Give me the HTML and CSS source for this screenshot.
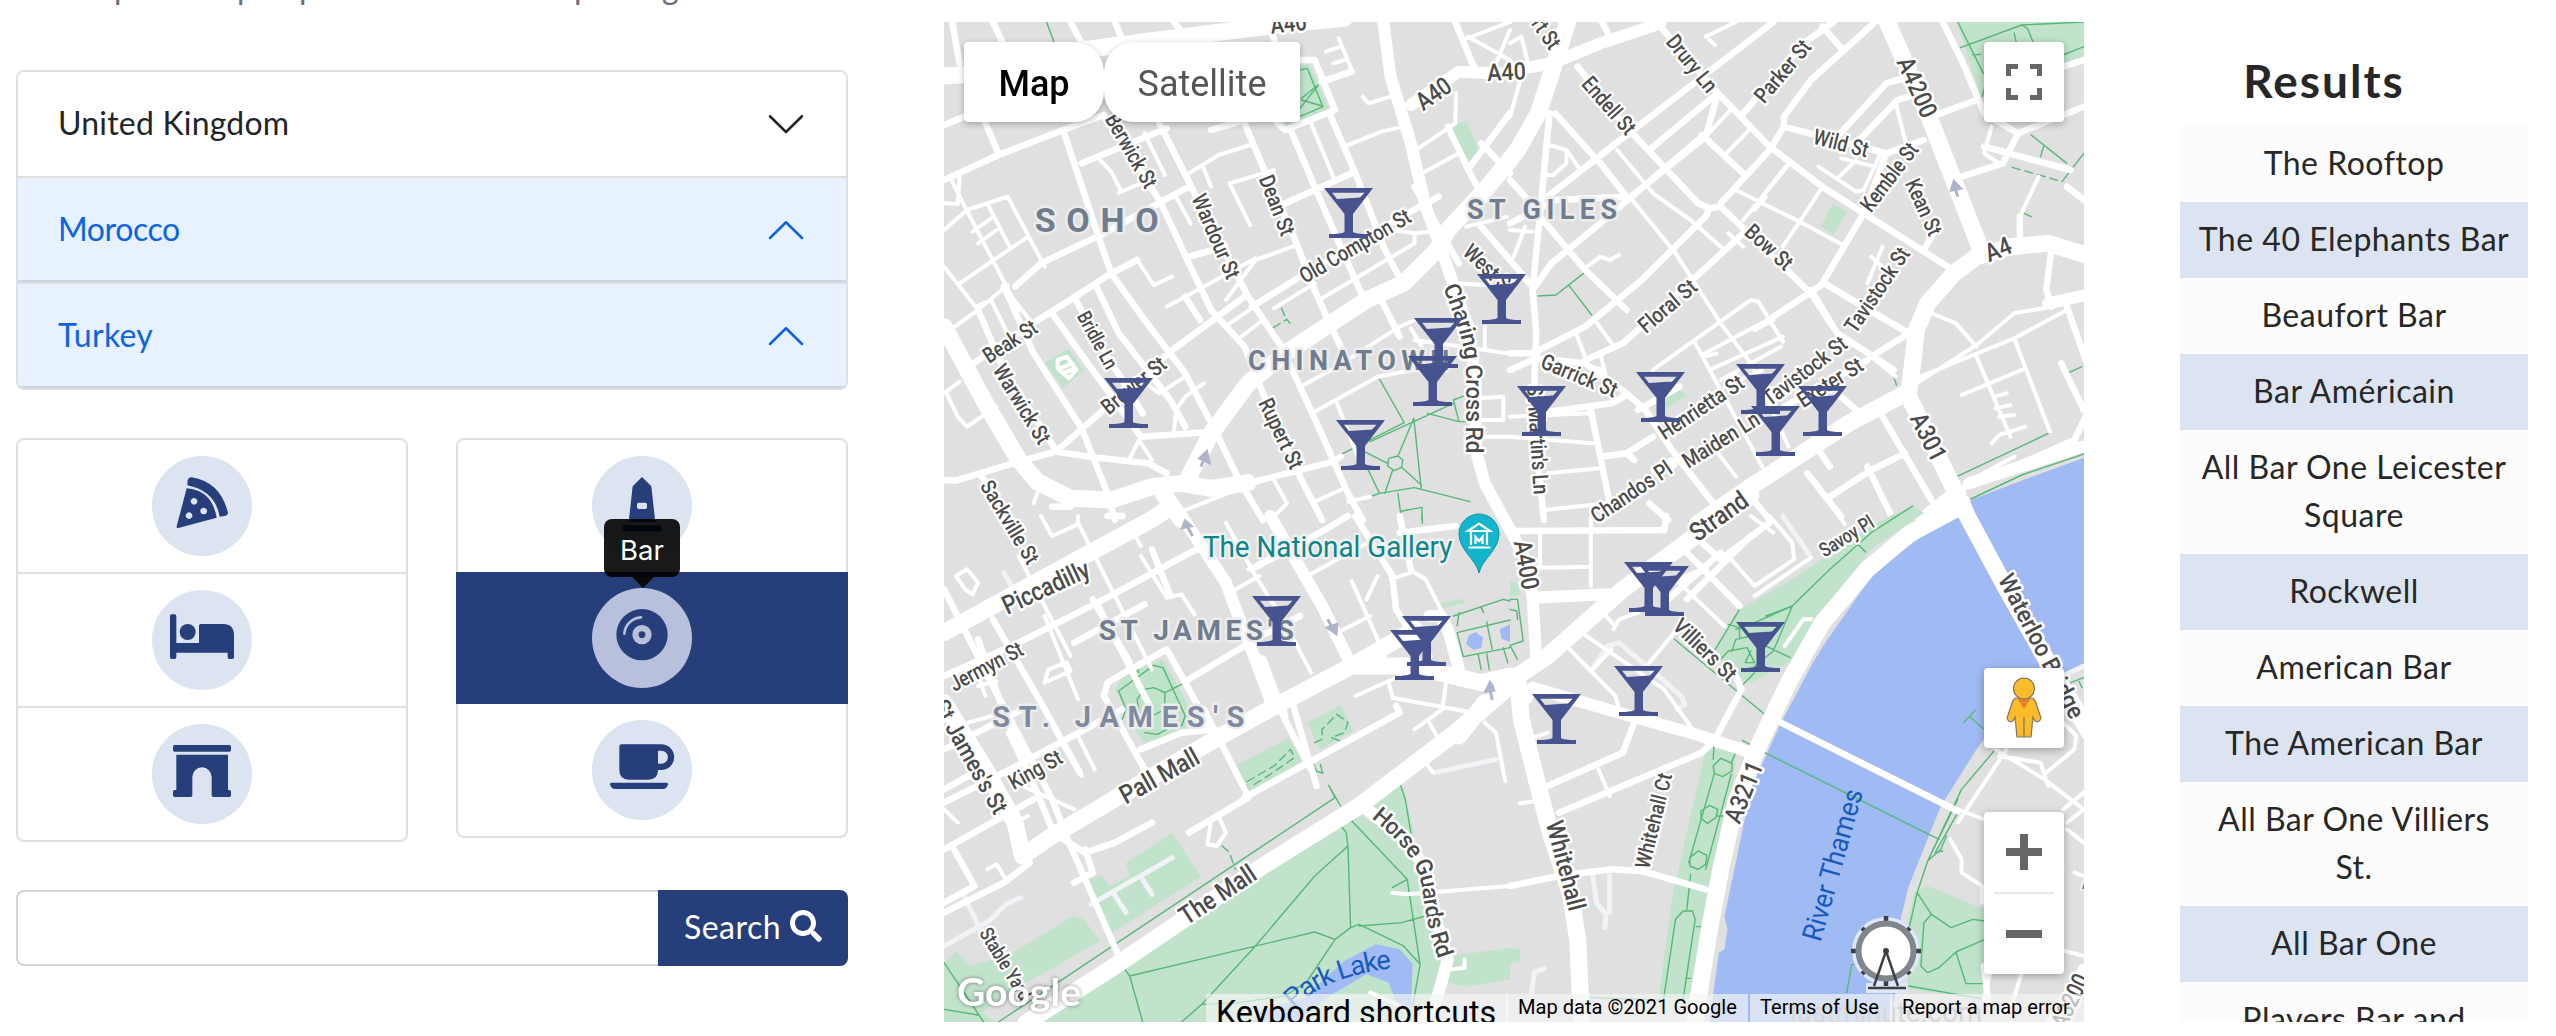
FILE: index.html
```html
<!DOCTYPE html>
<html lang="en">
<head>
<meta charset="utf-8">
<title>Places</title>
<link rel="stylesheet" href="styles.css">
</head>
<body>
<main class="page">
  <section class="filters">
    <p class="intro"><span>p</span><span>p</span><span>p</span><span>p</span><span>g</span></p>
    <div class="accordion">
      <div class="country"><span class="w-uk">United Kingdom</span><svg viewBox="0 0 16 16"><path d="M1.6 4.9 8 11.2l6.4-6.3"/></svg></div>
      <div class="country open"><span class="w-mo">Morocco</span><svg viewBox="0 0 16 16"><path d="M1.6 11.2 8 4.9l6.4 6.3"/></svg></div>
      <div class="country open"><span class="w-tu">Turkey</span><svg viewBox="0 0 16 16"><path d="M1.6 11.2 8 4.9l6.4 6.3"/></svg></div>
    </div>
    <div class="categories">
      <div class="list">
        <div class="item"><svg class="badge" viewBox="0 0 300 300"><path d="M107 72q3-9 12-8Q205 78 228 170q0 7-7 9l-18 3Q190 105 106 88z"/><path fill-rule="evenodd" d="M104 97Q180 103 194 185L79 216q-6 1-5-5zM126 126a10 10 0 1 0 .1 0zM155 155a10 10 0 1 0 .1 0zM111 169a10 10 0 1 0 .1 0z"/></svg></div>
        <div class="item"><svg class="badge" viewBox="0 0 300 300"><path d="M59 73h9q5 0 5 5v81h68v-52q0-5 5-5h67q33 0 33 34v66q0 5-5 5h-9q-5 0-5-5v-14H73v14q0 5-5 5h-9q-5 0-5-5V78q0-5 5-5z"/><circle cx="107" cy="126" r="24"/></svg></div>
        <div class="item"><svg class="badge" viewBox="0 0 300 300"><rect x="63" y="63" width="174" height="20" rx="5"/><path d="M73 92h155v106h4q5 0 5 5v11q0 5-5 5h-48q-5 0-5-5v-55a29 29 0 0 0-58 0v55q0 5-5 5H68q-5 0-5-5v-11q0-5 5-5h5z"/></svg></div>
      </div>
      <div class="list">
        <div class="item"><svg class="badge" viewBox="0 0 300 300"><path fill-rule="evenodd" d="M150 63 178 91 190 198H110L122 91zM140 140q-5 0-5 5v9q0 5 5 5h20q5 0 5-5v-9q0-5-5-5zM92 208h116v18H92z"/></svg></div>
        <div class="item active"><svg class="badge" viewBox="0 0 300 300"><circle cx="150" cy="140" r="77"/><circle class="gap" cx="150" cy="140" r="29"/><circle cx="150" cy="140" r="10"/><path class="shine" d="M97 137A53 53 0 0 1 147 88"/></svg><span class="tooltip">Bar</span></div>
        <div class="item"><svg class="badge" viewBox="0 0 300 300"><path fill-rule="evenodd" d="M88 73h120a38 38 0 0 1 0 77h-10q0 29-29 29h-58q-29 0-29-29V79q0-6 6-6zM198 92v39h10a19 19 0 0 0 0-39z"/><path d="M58 188h166q4 0 4 5-3 14-16 14H70q-13 0-16-14 0-5 4-5z"/></svg></div>
      </div>
    </div>
    <div class="search"><div class="field"></div><div class="button"><span class="w-se">Search</span><svg viewBox="0 0 512 512"><path d="M505 442.700 405.300 343c-4.500-4.500-10.600-7-17-7H372c27.600-35.300 44-79.700 44-128C416 93.100 322.900 0 208 0S0 93.100 0 208s93.100 208 208 208c48.300 0 92.700-16.400 128-44v16.300c0 6.400 2.500 12.500 7 17l99.700 99.700c9.400 9.400 24.600 9.400 33.900 0l28.300-28.300c9.400-9.400 9.400-24.600.1-34zM208 336c-70.700 0-128-57.200-128-128 0-70.700 57.200-128 128-128 70.700 0 128 57.200 128 128 0 70.700-57.200 128-128 128z"/></svg></div></div>
  </section>

  <section class="map">
    <svg class="tiles" viewBox="944 22 1140 1000">
      <rect class="land" x="944" y="22" width="1140" height="1000"/>
      <g class="sheet nw" transform="translate(930 0) scale(.3699 .33333)">
        <path class="park" d="M990 200 1025 190 1080 330 960 375zM1405 380 1450 362 1485 455 1460 490zM310 1090 375 1045 415 1110 360 1165z"/>
        <path class="path" d="M1000 210 1020 205 1062 320 1000 350M1000 325 1050 255M1005 295 1045 258M1005 300 1060 318M315 66 335 125M1215 1137 1282 1268 1090 1375M1190 1325 1415 1210M1308 1255 1328 1465M1308 1255 1265 1368 1240 1375 1237 1398 1255 1412 1275 1402 1278 1380 1265 1368M1237 1390 1165 1350M1278 1405 1328 1455M1250 1412 1230 1480M1185 1410 1215 1480 1195 1488M1215 1480 1310 1463 1460 1505M1345 1240 1430 1265 1415 1200 1445 1187M1430 1265 1450 1265M1265 1480 1275 1560M1275 1533 1330 1522V1560"/>
        <path class="path dash" d="M950 925 960 950M928 983 965 958 980 980"/>
        <path class="r4" d="M345 1080 370 1070 395 1110 375 1135 345 1105zM352 1105 385 1090M360 1120 390 1105M38 690 100 630 210 590 310 800M38 610 75 612 80 530M60 545 80 590 240 930M80 850 265 710M60 985 130 930 210 855M115 695 165 655M130 730 180 690M155 610 215 740M38 800 130 930M125 920 165 900 205 990M460 480 490 515 515 570M510 578 570 550M580 400 635 525M665 590 705 672M560 780 605 855 655 830M810 550 865 675M810 550 930 510M740 505 760 560M700 520 780 465 865 435M1030 370 1090 530M1120 440 1220 395 1280 380M1070 155 1110 140M1105 115 1140 210 1065 245M1090 190 1120 180M1170 290 1185 310 1245 290M1320 445 1420 370 1422 280M1330 520 1430 460M1250 690 1310 700V730L1060 895M1310 700 1400 690M715 770 800 735M810 970 870 925M830 1020 900 960M1010 1155 1100 1100 1270 980 1310 960M1040 1235 1210 1130 1400 1090M45 1180 75 1250 100 1280 180 1220M660 1290 665 1230 690 1190 740 1150M38 1180 80 1145M800 900 880 780 980 740M640 920 740 860 880 775M540 1375 565 1320 600 1380M280 1510 290 1480M690 1530 850 1460M930 1440 965 1510 920 1560M1100 1210 1160 1380M1040 1505 1110 1470M1130 1505 1190 1490M1440 120 1568 66M1455 110 1568 180M1530 190 1568 90M1310 1020 1560 1060M1480 1195 1550 1190V1260H1480M1490 1310H1568M1500 980V1050M1430 850 1560 860M930 925 1040 850M1450 680 1560 650M1300 985 1330 1040M620 1180 690 1130M270 960 200 860M560 1130 620 1180"/>
        <path class="r7" d="M60 66 80 190M170 66 195 125M380 66 410 130M500 66 520 120M660 66 680 95M38 375 92 350M150 370 185 460M38 540 185 465 360 390 470 345M360 390 460 725 490 820 580 960 690 1120 770 1290 840 1450 900 1560M410 490 640 385M620 370 720 590 790 740 860 890 950 1040 1050 1280 1130 1480 1170 1560M850 370 900 500 980 700 1040 870 1080 970 1130 1085M975 390 1040 560 1110 740 1170 890M1080 340 1150 520 1230 750 1275 845M470 345 620 600 700 790 760 930 850 1040 900 1180 1000 1430 1060 1560M340 1355 650 1055 850 890M870 920 1000 830 1290 640 1375 590M230 860 300 790 470 700 700 560M110 1095 300 955 400 885 490 820 560 780M130 930 200 1110 340 1350M390 890 450 1020 520 1140 575 1240M450 860 510 1000 650 1200 690 1280M330 940 420 1080 570 1310 765 1295M200 860 280 1060 410 1285 480 1480 500 1560M38 1440 70 1442 240 1385 340 1355 440 1372 590 1390 640 1420M860 1450 1090 1385 1110 1370M765 750 700 770M940 620 1140 520M690 890 730 960M760 390 870 355M940 370 960 390 1095 330 1040 180 1000 180M1420 66 1470 200M1310 560 1430 790M1400 380 1460 520 1500 600M1490 430 1568 520M1568 340 1500 440 1460 500M140 1430 220 1560M1220 900 1270 1010M1490 680 1568 780M330 1520 380 1520M1060 245 1140 215M920 90 960 200"/>
        <path class="r12" d="M1225 60 1245 230 1300 430 1340 620 1380 740 1420 870 1455 980 1475 1150 1475 1350 1500 1450 1568 1590M1300 315 1430 215 1568 222"/>
        <path class="r16" d="M38 228 200 215M410 150 700 108 960 72 1120 55M38 980 150 1210 240 1380 290 1445 380 1495 490 1500 600 1460 680 1450 760 1465 860 1448M690 1450 760 1300 860 1150 960 1060 1180 900 1280 850 1370 750 1400 690 1500 570 1568 480M630 1480 680 1560"/>
        <path class="oneway" d="M732 1400 742 1375M730 1375 748 1355 755 1388z"/>
      </g>
      <g class="sheet ne" transform="translate(1510 0) scale(.37628 .33333)">
        <path class="park" d="M1188 66H1530V180L1250 290zM860 610 895 635 860 705 825 680zM405 1150 440 1130 430 1160zM410 1200 445 1165 468 1185 415 1228z"/>
        <path class="water" d="M1530 1372 1370 1438 1230 1500 1150 1560H1530z"/>
        <path class="path" d="M1190 66 1258 220M1197 143 1360 75 1525 66M1360 75 1375 85 1390 125M1340 100 1345 125M1470 165 1525 140M1255 290 1262 260M1385 405 1480 490M1418 440 1410 470M1525 460 1467 545M75 888 122 885 205 812M157 857 217 945M1485 1118 1520 1100M1020 1130 1027 1155M1187 1430 1435 1298M1225 1497 1360 1425 1530 1360M1357 635 1385 650M1230 165 1250 163"/>
        <path class="path dash" d="M1335 502 1467 545"/>
        <path class="r4" d="M105 435 150 450 150 490 115 525H100M150 450 190 515M285 450 380 580M325 600 440 760 560 970 640 1090 740 1340M380 580 480 660 570 750M205 800 240 770 265 780 290 765M590 325 520 410M640 385 570 465M740 495 620 660M600 570 770 665 885 735M680 590 650 630M825 570 770 665 725 740M670 590 740 490M880 475 970 500M875 530 920 480M1025 310 1050 420M820 500 920 575 940 570 985 460M990 740 950 850M960 770 990 800M1110 935 1185 970 1240 1040M1080 1150 1240 1035 1340 940 1440 920M1090 1130 1340 1015 1480 930M1340 1015 1435 1295M1240 1070 1330 1310M1200 1185 1370 1105M1285 1190 1320 1180M1290 1225 1330 1215M1300 1250 1340 1245M1280 1330 1300 1305 1370 1280M1280 380 1260 460 1300 490M1260 440 1310 450M1405 530 1355 650M175 1000 210 1100 250 1110M240 1060 255 1130M225 960 270 1030M380 1110 640 900 660 905 725 1025M490 1025 670 1400M560 970 640 1090M530 1110 725 1010M510 1065 700 950M515 1070 550 1060M650 990 700 960M560 1140 720 1040M570 1160 670 1110M380 1170 440 1140M0 1250 210 1240M0 1310 220 1330M100 1420 240 1405M90 1530 260 1510M540 1340 600 1430M0 690 60 695M40 680 10 770M1225 1440 1340 1370M620 740 580 700M960 1070 1025 1130M0 130 30 110 50 200M0 350 30 230M530 120 545 135M520 110 600 66"/>
        <path class="r7" d="M245 66 265 110M400 80 540 265 690 440 830 560 1170 805M180 200 300 370 500 610 530 625 560 620 800 880 870 1000 1020 1110M0 670 120 600 310 590M100 590 270 440 500 240 700 66M310 600 520 410 550 290M540 290 370 450M120 340 240 490 310 590M620 340 780 130 860 66M970 66 800 240 728 350V380L1000 460 1100 420M728 380 690 450 560 610M60 870 110 790 240 670 510 410M60 1060 200 980 350 840 520 650 530 625M0 1060H70M0 1110 70 1075 200 1090 310 1180 360 1230 430 1350 540 1510M200 1080 300 1030 480 845 620 700M80 650 200 810 310 930M510 405 620 520M870 1000 800 870M830 850 940 640 1000 460M835 850 1060 1000M700 950 835 850M960 1070 1060 1000 1080 990M950 1080 730 1220M105 340 80 640 60 870 70 1000 65 1130 75 1400 90 1560M0 540 80 640M0 780 60 860M1120 350 1240 300M870 410 1000 250 1060 230M920 430 1030 300 1060 290M1150 66 1200 180 1260 340 1350 400 1525 320M1350 400 1310 490 1200 530M1260 440 1490 510M1355 650V720M1480 560 1525 600M1440 740 1425 870 1440 920M1480 920 1530 1080M1465 1090 1525 1230M1100 750 1130 690M1470 200 1525 180M75 1240 270 1210 310 1185M340 1230 450 1160M240 1370 310 1360 380 1310M215 1230 265 1510M310 1360 330 1380M820 1350 850 1400M990 1250 1120 1500M790 1420 880 1550M850 1490 960 1410 1050 1360M950 1400 1010 1540M640 1490 690 1560M870 1180 920 1230M830 80 885 150M370 1510 420 1560M1190 1470 1420 1360 1500 1320 1530 1250"/>
        <path class="r12" d="M0 212 110 190 240 130 400 70M430 1390 390 1410M1430 910 1530 885M1220 1450 1520 1340"/>
        <path class="r16" d="M155 60 110 220 75 340 20 450-30 520M1000 60 1110 340 1255 760M1530 765 1430 730 1330 740 1240 770 1180 820 1110 910 1080 990 1070 1090 1060 1175M1060 1175 900 1270 640 1460 500 1570M1060 1190 1130 1350 1220 1560M1190 1480 1100 1560"/>
        <path class="oneway" d="M1190 590 1183 565M1173 570 1180 545 1197 565z"/>
      </g>
      <g class="sheet sw" transform="translate(930 516) scale(.3699 .33333)">
        <path class="park" d="M500 520 520 480 630 430 705 580 690 640 580 680 565 660zM825 750 970 665 1005 735 860 830zM1020 620 1110 568 1145 645 1055 700zM410 1100 465 1078 485 1110 540 1080 530 1040 655 950 732 1083 490 1252 440 1165zM38 1340 70 1305 110 1350 225 1310 385 1200 415 1210 460 1275 215 1430 140 1490 185 1520H38zM290 1520 520 1345 900 1075 1150 890 1300 985 1345 1150 1375 1320 1400 1380 1350 1520zM1190 865 1270 800 1285 850 1310 960zM1410 1320 1568 1295V1390L1450 1412 1400 1400zM1360 265 1440 248 1447 262 1375 280z"/>
        <path class="water" d="M870 1520 900 1480 1010 1445 1120 1335 1205 1285 1270 1300 1305 1345 1300 1475 1265 1470 1240 1400 1180 1375 1080 1440 990 1520zM1455 360 1475 348 1495 365 1490 395 1470 402 1450 385zM1540 340 1568 325V378L1545 368z"/>
        <path class="path" d="M510 525 605 448 630 455 690 600 680 630M510 525 530 580 520 610M560 550 578 520 605 515 635 530V580L600 600 565 590zM635 530 690 500M565 470 558 455M580 650 615 655 640 640M38 1340 145 1518M38 1480 130 1497M185 1518 1095 845 1078 808 1110 870M1105 920 1125 950 1130 990 1137 1235 1095 1270 1020 1395 960 1440 830 1460 735 1465 680 1518M1130 990 1040 1080 880 1290 735 1465M520 1350 540 1380 1040 1248 1095 1270M1132 905 1290 1090 1325 1345 1305 1470M1270 800 1285 850 1300 950M1250 1115 1290 1090M540 1380 575 1518M1137 1235 1160 1225 1280 1290 1325 1345M1160 1230 1275 1220 1340 1200M1415 300 1550 250 1568 255M1425 350 1568 312M1430 290 1425 330M1425 350 1442 422 1568 395M1505 318 1520 400M1490 275 1497 290M1482 415 1490 460M1505 413 1512 460M1550 395 1562 440M1275 0V30M1331 0V22M1035 740 1045 765 1062 772 1055 745"/>
        <path class="path dash" d="M862 830 852 800 930 750 975 700 985 725 920 775 870 810M1040 680 1060 670 1060 640 1100 595 1130 620 1120 650 1085 665 1110 675M790 990 810 1010 825 1060"/>
        <path class="r4 pale" d="M200 170 240 250M435 1165 655 1025M495 1130 530 1190M575 1090 600 1135M38 1290 160 1215 205 1165 245 1145M90 1135 140 1250M1365 770 1530 730"/>
        <path class="r4" d="M70 180 100 160 130 200 115 235 95 220zM240 120 380 420M300 0 330 60 400 25V0M400 20 600 460M310 300 400 550M38 640 200 590M310 500 320 460 370 440 380 465 320 495M130 510 180 495M400 660 445 760M210 650 330 930M360 690 410 780M230 800 390 880M245 910 265 900M155 1060 180 1045 205 1090M38 880 75 920M570 120 640 245 680 235 715 295M540 30 570 90M800 20 880 180 960 320 1030 470M810 230 890 180M860 160 960 100M1140 195 1230 420M1100 350 1190 300M1020 180 1200 70M1150 540 1270 480M1240 500 1250 540M1250 545 1470 590M1395 500 1385 580 1310 640M1350 620 1380 680M1340 740 1360 770M1500 620 1530 650 1555 795M1180 250 1210 180M1250 1130 1290 1135 1568 1110M1410 1360 1445 1355V1330M1190 1430 1270 1470M1245 190 1300 170M700 950 760 910M760 910 750 985 775 990 800 950 780 900M1310 170 1340 190 1390 300M130 480 150 540"/>
        <path class="r7" d="M38 220 170 510 330 850 380 990 510 1320M170 310 300 560 405 770M130 370 200 590 330 940M38 480 240 380 470 250 720 100M390 380 580 265M480 0 520 0M450 260 590 560M440 250 540 440M38 700 250 580M38 860 200 770 520 580M38 820 120 770M38 1000 280 850M470 540 480 500 510 480 640 400 760 640M470 540 590 780M570 700 680 650 770 640M700 490 850 390M740 580 860 840M600 100 650 240M850 845 1270 590M700 950 860 845M980 560 1045 810M945 580 1030 760M1150 0 1250 180 1260 280 1310 370 1350 420M870 160 1070 40 1130 0M1000 300 860 380M1270 0 1300 160M360 970 420 1010 500 980 600 920M390 1100 440 1070 420 1000M60 990 120 1110 38 1160M38 1190 200 1100 270 1040M950 560 960 600M1270 590 1260 570M1270 50 1420 30"/>
        <path class="r12" d="M680 0 800 200 850 350 920 540M920 0 1060 270 1140 450M1350 300 1380 300 1400 340 1430 460M1170 870 1290 975 1340 1060 1360 1180 1400 1330 1370 1450 1330 1520"/>
        <path class="r16" d="M38 350 300 190 600 10 640-20M38 560 150 760 230 920 250 1020M250 1020 330 960 770 670 950 560 1140 450 1310 340M1140 450 1300 450 1490 500 1568 480M260 1520 500 1350 900 1050 1160 870 1420 650 1568 510M890 440 930 560M1430 660 1500 560"/>
        <path class="oneway" d="M710 60 695 30M683 35 690 15 705 30zM1075 310 1088 335M1075 335 1098 352 1100 325zM1520 552 1514 520M1503 525 1514 500 1528 522z"/>
      </g>
      <g class="sheet se" transform="translate(1510 516) scale(.37628 .33333)">
        <path class="water" d="M1530-176 1370-110 1230-50 1150 10 965 175 835 385 805 440 720 620 640 820 600 1040 570 1200 578 1240 570 1300 555 1310 530 1520H1010L1030 1400 1040 1200 1060 1110 1145 870 1240 700 1330 560 1480 470 1530 440z"/>
        <path class="park" d="M610 280 750 190 930 50 1010 0 1070-30 1100-10 960 100 860 240 760 430 640 500 600 480 545 400zM520 700 600 700 590 850 550 1080 500 1450H395L430 1150 510 750zM1110 1110 1260 1180V1450L1060 1420 1040 1300 1075 1130zM0 195 25 205V240H0zM0 1295 25 1300 30 1340H0z"/>
        <path class="path" d="M1070-30 960 50 850 160 750 270 650 320 600 340M750 270 700 405M750 270 680 300M925 85 945 108M580 325 610 335 610 370M590 405 600 370 640 360 680 390 745 425M560 430 580 405 630 395 650 440 625 440 640 405M610 280 540 410M650 470 615 510M437 370 675 593M700 405 650 450M677 710 1140 970M542 690 540 730M600 710 588 740M540 750 560 727 590 742 590 765 565 782 543 772zM543 772 475 1040M588 775 520 1060M507 885 530 868 552 880 547 905 525 922 508 908zM478 1025 500 1005 523 1018 520 1045 500 1060 478 1050zM480 1075 470 1180M408 1450 440 1210 460 1185 485 1185 492 1210 460 1450M550 900H565M495 1232H507M468 1387H480M1290 700 1200 820 1110 1035 1082 1130 1050 1290M1190 890 1130 1010 1150 1005M1190 850 1110 1035 1145 1000 1160 960M1082 1130 1120 1195 1172 1235 1230 1210 1262 1215M1120 1195 1100 1220 1092 1350 1110 1370 1140 1355 1185 1308 1262 1270M1185 1308 1212 1403H1262M1060 1410 1262 1450M215 1445 400 1452M895 1430 908 1345H920M1020 1430V1450M1205 620 1237 583M1222 602 1260 640M0 250H20M20 250 35 375 0 388 20 430M0 280 18 285 20 310M1490 500 1525 485M1510 490 1520 515M618 673 637 685"/>
        <path class="r4 pale" d="M215 465 260 390 290 380 455 540 465 565 445 580M725 0 795 115M55 1450 65 1370 90 1358M220 1080 230 1160 255 1195 252 1235M265 1080V1190M1430 500 1525 450"/>
        <path class="r4" d="M215 0V210M80 40V150M80 155 215 152M275 340 290 310 340 290M255 300 275 325M190 350 410 520 485 640M150 390 280 540 290 580M220 460 270 400M370 440 440 345M580 120 650 210 755 130 750 80 690 0M650 240 800 125M500 140 600 260M440 190 570 330M730 390 780 310 800 310M50 670 100 650M235 760 265 840M25 862 70 855M1320 700 1190 920M1290 700 1420 790 1525 880M1300 720 1410 740 1430 810M1420 775 1500 700 1505 660 1470 620M1470 880 1525 830M1190 880 1260 910M1500 1070 1525 1080M1480 940 1525 980M1480 920 1525 880M1170 970 1200 1030V1070L1255 1110V1160M1280 1350 1260 1450M1360 1370 1330 1480M1460 1300 1525 1320M875 0 890 25M640 0 700 50"/>
        <path class="r7" d="M0 45 410 42 415 0M510 80 560 130 690 20M470 250 640 60M430 200 520 160M600 480 615 520 545 670 510 710 130 890M100 810 300 710 330 620M0 1110 130 1080 270 1060 350 1065 520 1120M720 620 1190 885M1260 1350 1270 1450M470 110 610 270M420 250 560 110"/>
        <path class="r12" d="M0 40 40 130 60 240 70 430M60 245 260 235M60 515 320 600 480 650 640 710M1525 1360 1440 1520"/>
        <path class="r16" d="M-20 510 100 420 300 220 480 70 640-60M20 480 30 610 70 790 110 960 160 1130 180 1270 190 1520M0 500 40 540M1200-40 1215 0 1315 210 1435 450 1540 650M1200-30 1060 55 950 160 830 320 740 500 660 690 600 860 560 1060 530 1240 490 1520"/>
      </g>
      <g class="eye"><circle class="halo" cx="1886" cy="951" r="34"/><path class="halo" d="M1866 983h42v10h-42z"/><path class="cabins" d="M1886 916v70M1851 951h70M1862 928l48 46M1910 928l-48 46"/><circle class="rim" cx="1886" cy="951" r="27.500"/><path class="legs" d="M1874 986l12-35 12 35M1868 988h38"/><circle class="hub" cx="1886" cy="951" r="3"/></g>
      <g id="labels"></g>
      <g class="pin"><path d="M1479 573c-3-14-20-23-20-39a20 20 0 0 1 40 0c0 16-17 25-20 39z"/><path class="museum" d="M1468.500 547.500h22M1471 545v-13M1487 545v-13M1468 531h22l-11-7.500zM1475.500 544v-7l3.500 4 3.500-4v7"/></g>
      <g id="markers"></g>
      <text class="logo" x="957" y="1006" textLength="124" lengthAdjust="spacingAndGlyphs">Google</text>
    </svg>
    <div class="maptype"><span class="on">Map</span><span>Satellite</span></div>
    <div class="ctl full"><svg viewBox="0 0 36 36"><path d="M2.500 12V2.500H12M24 2.500h9.500V12M33.500 24v9.500H24M12 33.500H2.500V24"/></svg></div>
    <div class="ctl peg"><svg viewBox="0 0 36 62"><path class="body" d="M10 21h16q3 1 4 5l5 15q-1 5-6 3l-2-4-2 20H11L9 40l-2 4q-5 2-6-3l5-15q1-4 4-5z"/><path class="scarf" d="M11 21h14l-7 11z"/><path class="body" d="M18 40v20"/><circle class="body" cx="18" cy="11.500" r="10.500"/></svg></div>
    <div class="ctl zoom"><svg viewBox="0 0 36 36"><path d="M18 0v36M0 18h36"/></svg><hr><svg viewBox="0 0 36 36"><path d="M0 18h36"/></svg></div>
    <div class="legal"><span class="keys">Keyboard shortcuts</span><span class="data">Map data ©2021 Google</span><span class="terms">Terms of Use</span><span class="report">Report a map error</span></div>
  </section>

  <section class="results">
    <h2>Results</h2>
    <ul><li>The Rooftop</li><li>The 40 Elephants Bar</li><li>Beaufort Bar</li><li>Bar Américain</li><li>All Bar One Leicester<br>Square</li><li>Rockwell</li><li>American Bar</li><li>The American Bar</li><li>All Bar One Villiers<br>St.</li><li>All Bar One</li><li>Players Bar and<br>Kitchen</li></ul>
  </section>
</main>
<script src="map.js"></script>
</body>
</html>
```
FILE: map.js
```js
// Each sheet has its own origin and scale; labels run along a centre line
// given as x1, y1, x2, y2 in sheet units.
const sheets = {
  nw: [930, 0, .3699, 1 / 3], ne: [1510, 0, .37628, 1 / 3],
  sw: [930, 516, .3699, 1 / 3], se: [1510, 516, .37628, 1 / 3],
  page: [0, 0, 1, 1]
};
const labels = [
  ['nw', 'SOHO', 283, 661, 618, 661, 34, 'area'],
  ['nw', 'Berwick St', 490, 345, 600, 558], ['nw', 'Wardour St', 726, 585, 822, 832],
  ['nw', 'Dean St', 908, 528, 970, 703], ['nw', 'Old Compton St', 1003, 832, 1294, 643],
  ['nw', 'Bridle Ln', 413, 938, 494, 1102, 20], ['nw', 'Beak St', 148, 1072, 284, 975],
  ['nw', 'Warwick St', 186, 1098, 312, 1325], ['nw', 'Brewer St', 470, 1228, 630, 1083],
  ['nw', 'Rupert St', 906, 1198, 994, 1402], ['page', 'Sackville St', 986, 482, 1034, 562, 21],
  ['nw', 'CHINATOWN', 860, 1080, 1404, 1080, 27, 'area'],
  ['nw', 'A40', 920, 76, 1018, 64, 24], ['nw', 'A40', 1320, 312, 1402, 248, 25],
  ['page', 'A40', 1487, 72.500, 1526, 70.500, 24], ['page', 'ST GILES', 1467, 209, 1617, 209, 27, 'area'],
  ['page', 'West St', 1467, 248, 1512, 290],
  ['ne', 'rt St', 72, 58, 122, 140], ['ne', 'Endell St', 203, 238, 324, 394],
  ['ne', 'Drury Ln', 428, 112, 540, 268], ['ne', 'Parker St', 660, 298, 788, 128],
  ['ne', 'A4200', 1048, 174, 1117, 348, 25], ['ne', 'Wild St', 808, 408, 952, 450],
  ['ne', 'Kemble St', 943, 626, 1072, 435], ['ne', 'Kean St', 1068, 540, 1133, 702],
  ['ne', 'Bow St', 634, 684, 744, 797], ['ne', 'Tavistock St', 902, 990, 1048, 748],
  ['ne', 'A4', 1264, 762, 1330, 732, 25], ['ne', 'Floral St', 348, 985, 488, 850],
  ['ne', 'Tavistock St', 678, 1202, 888, 1022], ['ne', 'Exeter St', 768, 1205, 932, 1088],
  ['ne', 'Henrietta St', 400, 1302, 615, 1140], ['ne', 'Maiden Ln', 463, 1387, 657, 1250],
  ['ne', 'Garrick St', 86, 1080, 283, 1172], ['ne', 'Chandos Pl', 220, 1552, 424, 1398],
  ['ne', 'A301', 1083, 1243, 1143, 1378, 25], ['page', 'Strand', 1692, 535, 1745, 497, 26],
  ['ne', "St Martin's Ln", 66, 1155, 84, 1483],
  ['se', 'Savoy Pl', 826, 107, 962, 12, 20], ['se', 'A400', 33, 73, 56, 220, 25],
  ['se', 'Villiers St', 444, 318, 594, 484], ['se', 'Waterloo Bridge', 1316, 178, 1510, 602, 24],
  ['se', 'A3211', 588, 917, 652, 738, 25], ['se', 'Whitehall Ct', 350, 1056, 412, 772, 21],
  ['se', 'Whitehall', 118, 915, 180, 1182, 25], ['se', 'River Thames', 800, 1272, 913, 820, 28, 'blue'],
  ['se', 'A3200', 1455, 1530, 1520, 1378, 24], ['se', 'lastminute.com', 745, 1488, 1255, 1488, 27, 'faint'],
  ['se', 'WA', 1392, 1083, 1580, 1083, 34, 'area'],
  ['sw', 'Piccadilly', 198, 272, 427, 154, 26], ['sw', 'The National Gallery', 738, 92, 1412, 92, 29, 'teal'],
  ['sw', "ST JAMES'S", 456, 342, 984, 342, 28, 'area'], ['sw', "ST. JAMES'S", 168, 603, 850, 603, 29, 'area soft'],
  ['sw', 'Jermyn St', 56, 507, 247, 394], ['sw', "St James's St", 26, 556, 194, 887, 24],
  ['sw', 'King St', 216, 802, 352, 718], ['sw', 'Pall Mall', 517, 842, 722, 715, 26],
  ['sw', 'The Mall', 680, 1206, 874, 1064, 26], ['sw', 'Stable Yard', 148, 1240, 262, 1446, 20],
];
const curves = [
  ['Charing Cross Rd', 'M1443 287 C1460 330 1467 350 1466 385 L1466 450', 23, '', 170],
  ['Horse Guards Rd', 'M1371 818 C1405 845 1420 865 1423 895 C1427 925 1432 940 1438 958', 23, '', 162],
  ['Park Lake', 'M1294 1009 Q1325 976 1394 968', 27, 'blue', 108],
];
const bars = [[1324, 188], [1104, 378], [1336, 420], [1414, 318], [1408, 356], [1477, 274],
  [1636, 372], [1517, 386], [1736, 364], [1798, 386], [1751, 406], [1252, 596], [1402, 616],
  [1390, 630], [1624, 562], [1640, 566], [1736, 622], [1614, 666], [1532, 694]];

let out = '';
for (const [s, text, a, b, c, d, size = 22, kind = ''] of labels) {
  const [ox, oy, sx, sy] = sheets[s];
  const x = ox + a * sx, y = oy + b * sy, w = (c - a) * sx, h = (d - b) * sy;
  const angle = Math.atan2(h, w) * 180 / Math.PI;
  const adjust = kind.startsWith('area') ? 'spacing' : 'spacingAndGlyphs';
  out += `<text class="label ${kind}" transform="translate(${x} ${y}) rotate(${angle})" y="${size * .355}" font-size="${size}" textLength="${Math.hypot(w, h)}" lengthAdjust="${adjust}">${text}</text>`;
}
curves.forEach(([text, d, size, kind, len], i) => {
  out += `<path id="curve${i}" d="${d}" fill="none"/><text class="label ${kind}" font-size="${size}"><textPath href="#curve${i}" textLength="${len}">${text}</textPath></text>`;
});
document.getElementById('labels').innerHTML = out;
document.getElementById('markers').innerHTML = bars.map(([x, y]) =>
  `<path transform="translate(${x} ${y})" d="M0 0H49L29 26V44Q32 46 44 46V50H5V46Q17 46 20.500 44V26zM8 4.800 13 11 36 9.500 40.500 4.800z"/>`).join('');
```
FILE: styles.css
```css
* { box-sizing: border-box; }
body { margin: 0; background: #fff; color: #212529; font-family: Lato, "Open Sans", sans-serif; font-size: 32px; overflow: hidden; }
.page { display: flex; gap: 96px; height: 1022px; padding-left: 16px; overflow: hidden; }

.filters { width: 832px; flex: none; }
.intro { display: grid; grid-template-columns: 123px 62px 275px 88px 60px; height: 70px; margin: 0; padding-left: 98px; line-height: 48px; color: #6c6c7c; overflow: hidden; }
.intro span { margin-top: -37px; }

.accordion { border: 2px solid #dfdfdf; border-radius: 8px; overflow: hidden; height: 320px; }
.country { display: flex; align-items: center; justify-content: space-between; height: 104px; padding: 0 40px; background: #fff; }
.country span { margin-top: -3px; }
.country + .country { height: 106px; border-top: 2px solid #dfdfdf; }
.country.open { color: #0c63e4; background: #e7f1ff; box-shadow: inset 0 -2px 0 #c9d4e3; }
.country svg { width: 40px; height: 40px; fill: none; stroke: currentColor; stroke-width: 1; stroke-linecap: round; stroke-linejoin: round; }
.w-uk { letter-spacing: .2px; }
.w-mo { letter-spacing: -.4px; }
.w-tu { letter-spacing: .3px; }

.categories { display: grid; grid-template-columns: 392px 392px; gap: 48px; align-items: start; margin-top: 48px; }
.list { border: 2px solid #dfdfdf; border-radius: 8px; }
.item { position: relative; display: flex; align-items: center; justify-content: center; height: 132px; }
.list:first-child .item + .item { height: 134px; border-top: 2px solid #dfdfdf; }
.item.active { margin: 0 -2px; background: #263e7a; }
.badge { width: 100px; height: 100px; border-radius: 50%; background: #dce3f1; fill: #263e7a; margin-left: -20px; }
.active .badge { background: #b9c0db; }
.badge .gap { fill: #b9c0db; }
.badge .shine { fill: none; stroke: #b9c0db; stroke-width: 8; stroke-linecap: round; }
.tooltip { position: absolute; left: 148px; top: -53px; width: 76px; height: 58px; border-radius: 8px; background: rgba(0, 0, 0, .9); color: #fff; font: 27.500px/62px Inter, sans-serif; text-align: center; }
.tooltip::after { content: ""; position: absolute; left: 28px; top: 58px; border: 11px solid transparent; border-top-color: #0a0a0a; border-bottom: 0; }

.search { display: flex; height: 76px; margin-top: 48px; }
.field { flex: 1; border: 2px solid #ced4da; border-right: 0; border-radius: 8px 0 0 8px; }
.button { display: flex; align-items: center; justify-content: center; gap: 9px; width: 190px; border-radius: 0 8px 8px 0; background: #263e7a; color: #fff; }
.button svg { width: 32px; height: 32px; fill: #fff; margin-top: -4px; }
.w-se { letter-spacing: .5px; margin-top: -3px; }

.map { position: relative; width: 1140px; height: 1000px; margin-top: 22px; flex: none; overflow: hidden; font-family: Roboto, sans-serif; }
.tiles { display: block; width: 1140px; height: 1000px; }
.land { fill: #e0e0e0; }
.park { fill: #c1e3cc; }
.water { fill: #a0bbf3; }
.sheet path { vector-effect: non-scaling-stroke; }
.path, .r4, .r7, .r12, .r16 { fill: none; stroke: #fff; stroke-linecap: round; stroke-linejoin: round; }
.path { stroke: #55b877; stroke-width: 1.4; }
.dash { stroke-dasharray: 8 5; }
.r4 { stroke-width: 4; }
.r4.pale { stroke: #f1f3f6; stroke-width: 5; }
.r7 { stroke-width: 6.5; }
.r12 { stroke-width: 12; }
.r16 { stroke-width: 17; }
.oneway { fill: #b0b3cc; stroke: #b0b3cc; stroke-width: 3; }
.label { fill: #4b4b4b; stroke: #fff; stroke-width: 5px; stroke-linejoin: round; paint-order: stroke; font-weight: 500; }
.label.area { fill: #6f7d8f; stroke: #ececec; font-weight: 700; }
.label.soft { fill: #7f8aa0; }
.label.blue { fill: #185abc; stroke: none; font-weight: 400; }
.label.teal { fill: #0b858c; stroke: #f1f1f1; font-weight: 400; }
.label.faint { fill: #9a9a9a; font-weight: 400; stroke: none; }
#markers path { fill: #46538f; fill-rule: evenodd; }
.halo { fill: #dfe8fb; }
.cabins { stroke: #3c4043; stroke-width: 4.5; }
.rim { fill: #fff; stroke: #80868b; stroke-width: 6; }
.legs { fill: none; stroke: #3c4043; stroke-width: 2.500; }
.hub { fill: #3c4043; }
.pin > path { fill: #12b5cb; stroke: #0c93a5; }
.pin .museum { fill: none; stroke: #fff; stroke-width: 2.2; }
.logo { fill: #fff; font: 700 38px Lato, sans-serif; filter: drop-shadow(0 0 2px rgba(0, 0, 0, .45)); }

.maptype { position: absolute; left: 20px; top: 20px; display: flex; filter: drop-shadow(0 2px 3px rgba(0, 0, 0, .28)); }
.maptype span { width: 196px; height: 80px; background: #fff; border-radius: 30px 4px 4px 30px; color: #565656; font-size: 36px; line-height: 84px; text-align: center; }
.maptype .on { width: 140px; border-radius: 4px 30px 30px 4px; color: #000; font-weight: 500; }
.ctl { position: absolute; right: 20px; width: 80px; display: flex; align-items: center; justify-content: center; background: #fff; border-radius: 4px; box-shadow: 0 2px 8px rgba(0, 0, 0, .3); }
.ctl svg { width: 36px; height: 36px; fill: none; stroke: #666; }
.full { top: 20px; height: 80px; }
.full svg { stroke-width: 5; }
.peg { top: 646px; height: 80px; }
.peg svg { height: 62px; width: 36px; }
.peg .body { fill: #fbbc2c; stroke: #7d7663; stroke-width: 1.2; }
.peg .scarf { fill: #e58430; stroke: none; }
.zoom { top: 790px; height: 162px; flex-direction: column; justify-content: center; gap: 22px; }
.zoom svg { stroke-width: 8; }
.zoom hr { width: 60px; height: 2px; margin: 0; border: 0; background: #e6e6e6; }
.legal { position: absolute; right: 0; bottom: 0; display: grid; grid-template-columns: 300px 242px 142px 194px; height: 28px; overflow: hidden; color: #000; font-size: 20.100px; line-height: 27px; white-space: nowrap; }
.legal span { background: rgba(245, 245, 245, .68); padding-left: 10px; border-left: 2px solid rgba(255, 255, 255, .5); }
.legal .keys { font-size: 32.300px; line-height: 39px; padding-left: 10px; border: 0; }
.legal .terms { border-left-color: #a0bbf3; }

.results { width: 348px; flex: none; color: #272727; }
.results h2 { width: 288px; margin: 0; padding-top: 52px; height: 126px; font-size: 46px; line-height: 58px; font-weight: 700; text-align: center; letter-spacing: 2px; }
.results ul { margin: 0; padding: 0; list-style: none; text-align: center; line-height: 48px; letter-spacing: .5px; }
.results li { padding: 13px 0 15px; background: #fcfcfc; }
.results li:nth-child(even) { background: #dce3f1; }
```
